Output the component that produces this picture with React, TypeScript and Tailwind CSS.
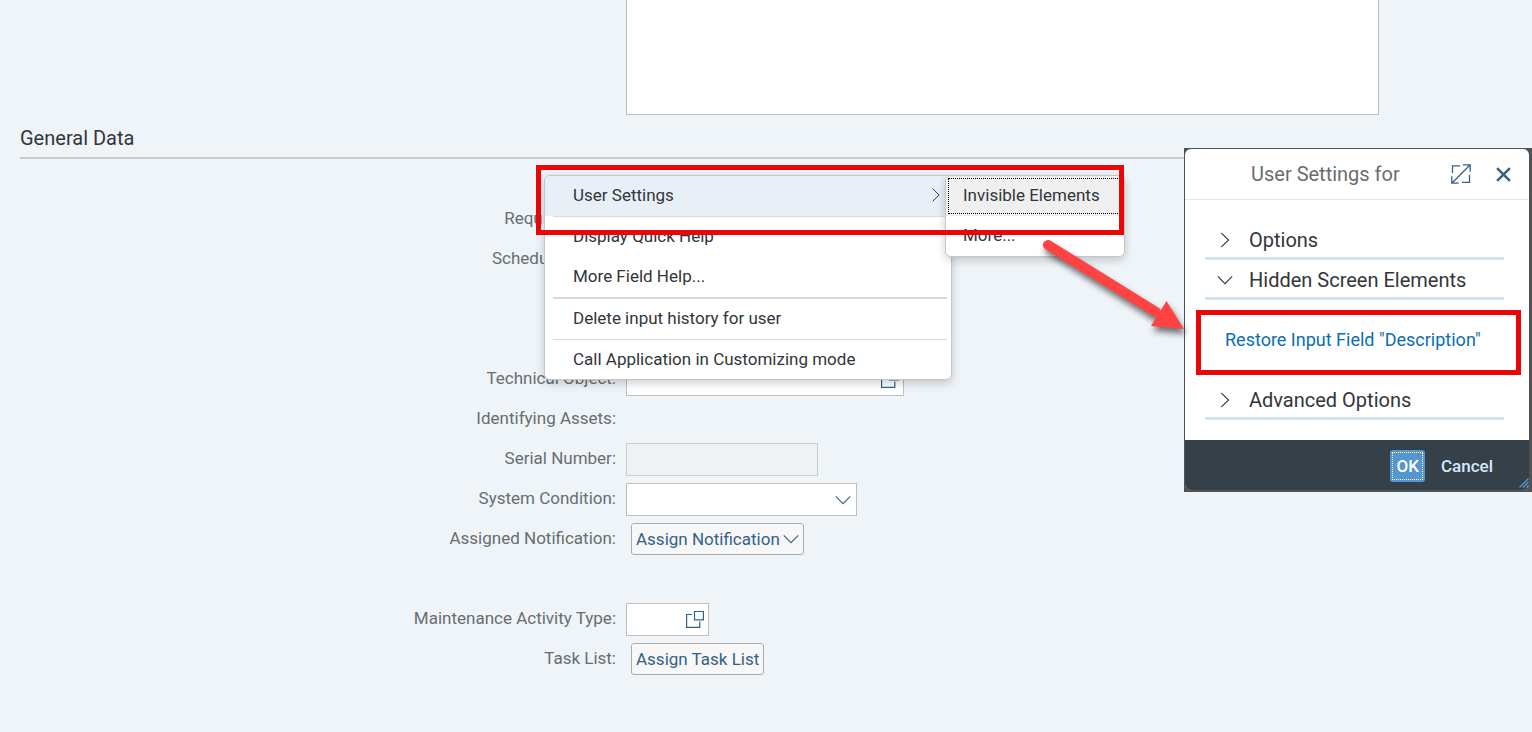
import React from "react"
import { clsx } from "clsx"

type IconProps = { className?: string }

function ChevronIcon({ className }: IconProps) {
  return (
    <svg viewBox="0 0 16 16" fill="none" stroke="currentColor" strokeWidth="1.1" className={className} aria-hidden="true">
      <path d="M4.2 0.8 11.6 8 4.2 15.2" />
    </svg>
  )
}

function ChevronDownIcon({ className }: IconProps) {
  return (
    <svg viewBox="0 0 16 16" fill="none" stroke="currentColor" strokeWidth="1.1" className={className} aria-hidden="true">
      <path d="M0.8 4.4 8 11.6 15.2 4.4" />
    </svg>
  )
}

function ValueHelpIcon({ className }: IconProps) {
  return (
    <svg viewBox="0 0 18 18" fill="none" stroke="currentColor" strokeWidth="1.2" className={className} aria-hidden="true">
      <path d="M6 4.5H.6v12.900h13.200V11.500" />
      <path d="M8.500 1.500h8.900v8.400H8.500z" />
    </svg>
  )
}

function MaximizeIcon({ className }: IconProps) {
  return (
    <svg viewBox="0 0 20 20" fill="none" stroke="currentColor" strokeWidth="1.3" className={className} aria-hidden="true">
      <path d="M.8 19.2 19.2.8M12 .8h7.2v7M.8 12.200v7h7M1.500 9V1.800h7.500M18.500 11v7.400H11" />
    </svg>
  )
}

function CloseIcon({ className }: IconProps) {
  return (
    <svg viewBox="0 0 14 14" fill="none" stroke="currentColor" strokeWidth="2.3" className={className} aria-hidden="true">
      <path d="M1 1 13 13M13 1 1 13" />
    </svg>
  )
}

function FormRow({ label, id, children }: { label?: string; id?: string; children?: React.ReactNode }) {
  return (
    <div className="flex h-10 items-center gap-[10px]">
      <label htmlFor={id} className="w-[616px] shrink-0 pb-0.5 text-right text-[#6a6d70]">
        {label}
      </label>
      {children}
    </div>
  )
}

function ValueHelpInput({ id, className }: { id: string; className: string }) {
  return (
    <div className={clsx("flex h-[33px] items-center border border-[#bfbfbf] bg-white pr-1", className)}>
      <input id={id} type="text" className="h-full w-0 min-w-0 flex-1 outline-none" />
      <button type="button" aria-label="Value help" className="text-[#346187]">
        <ValueHelpIcon className="h-[18px] w-[18px]" />
      </button>
    </div>
  )
}

const actionButton =
  "ml-[5px] flex h-8 items-center gap-[3px] rounded-[3px] border border-[#ababab] bg-[#f7f7f7] px-1 text-[#346187]"

function GeneralData() {
  return (
    <section>
      <h2 className="ml-5 border-b-2 border-[#cacaca] pt-2 pb-1 text-[20px] leading-[30px] text-[#32363a]">
        General Data
      </h2>
      <form className="pt-10">
        <FormRow label="Required Start:" />
        <FormRow label="Scheduled Start:" />
        <FormRow />
        <FormRow />
        <FormRow label="Technical Object:" id="technical-object">
          <ValueHelpInput id="technical-object" className="w-[278px]" />
        </FormRow>
        <FormRow label="Identifying Assets:" />
        <FormRow label="Serial Number:" id="serial-number">
          <input
            id="serial-number"
            type="text"
            readOnly
            className="h-[33px] w-[192px] border border-[#cccccc] bg-[#eff2f5] px-2"
          />
        </FormRow>
        <FormRow label="System Condition:" id="system-condition">
          <div className="relative">
            <select
              id="system-condition"
              className="block h-[33px] w-[231px] appearance-none border border-[#bfbfbf] bg-white px-2"
            >
              <option></option>
            </select>
            <ChevronDownIcon className="pointer-events-none absolute top-[9px] right-1.5 h-4 w-4 text-[#346187]" />
          </div>
        </FormRow>
        <FormRow label="Assigned Notification:" id="assign-notification">
          <button id="assign-notification" type="button" className={actionButton}>
            Assign Notification
            <ChevronDownIcon className="h-4 w-4" />
          </button>
        </FormRow>
        <FormRow />
        <FormRow label="Maintenance Activity Type:" id="activity-type">
          <ValueHelpInput id="activity-type" className="w-[83px]" />
        </FormRow>
        <FormRow label="Task List:" id="assign-task-list">
          <button id="assign-task-list" type="button" className={actionButton}>
            Assign Task List
          </button>
        </FormRow>
      </form>
    </section>
  )
}

function MenuItem({ children, className }: { children: React.ReactNode; className?: string }) {
  return (
    <button
      type="button"
      role="menuitem"
      className={clsx("flex h-10 w-full items-center justify-between pr-2 pb-0.5 pl-7 text-left", className)}
    >
      {children}
    </button>
  )
}

function ContextMenu() {
  return (
    <div
      role="menu"
      className="absolute top-[175px] left-[544px] h-[205px] w-[408px] overflow-hidden rounded-md border border-[#c4c6c8] bg-white text-[#32363a] shadow-[0_3px_10px_rgba(0,0,0,0.2)]"
    >
      <MenuItem className="bg-[#e8eff6]">
        User Settings
        <ChevronIcon className="h-[14px] w-[14px]" />
      </MenuItem>
      <hr className="mr-1 ml-2 border-[#d9dcde]" />
      <MenuItem>Display Quick Help</MenuItem>
      <MenuItem>More Field Help...</MenuItem>
      <hr className="mr-1 ml-2 border-t-2 border-[#d5dadd]" />
      <MenuItem>Delete input history for user</MenuItem>
      <hr className="mr-1 ml-2 border-[#d9dcde]" />
      <MenuItem>Call Application in Customizing mode</MenuItem>
    </div>
  )
}

function SubMenu() {
  return (
    <div
      role="menu"
      className="absolute top-[175px] left-[945px] w-[180px] overflow-hidden rounded-md border border-[#c4c6c8] bg-white text-[#32363a] shadow-[0_3px_10px_rgba(0,0,0,0.2)]"
    >
      <button type="button" role="menuitem" className="flex h-10 w-full bg-[#efefef] p-0.5 text-left">
        <span className="flex h-full w-full items-center border border-dotted border-black pb-0.5 pl-[14px]">
          Invisible Elements
        </span>
      </button>
      <button type="button" role="menuitem" className="flex h-10 w-full items-center pb-0.5 pl-[17px] text-left">
        More...
      </button>
    </div>
  )
}

function PanelHeader({ title, open }: { title: string; open?: boolean }) {
  return (
    <button
      type="button"
      aria-expanded={!!open}
      className="flex h-10 w-full items-center gap-4 border-b-[3px] border-[#d3e2ef] pt-0.5 pl-3 text-left text-[20px] text-[#32363a]"
    >
      {open ? <ChevronDownIcon className="h-4 w-4" /> : <ChevronIcon className="h-4 w-4" />}
      {title}
    </button>
  )
}

function SettingsDialog() {
  return (
    <div
      role="dialog"
      aria-labelledby="dialog-title"
      className="absolute top-[148px] right-0 w-[348px] border-t border-r-[3px] border-b-2 border-l border-[#505356] bg-[#505356]"
    >
      <div className="overflow-hidden rounded-md bg-white">
        <header className="flex h-[51px] items-center border-b border-[#e5e5e5] pr-[18px] pl-[66px] text-[#346187]">
          <h2 id="dialog-title" className="flex-1 text-[20px] text-[#6a6d70]">
            User Settings for
          </h2>
          <button type="button" aria-label="Maximize" className="mr-[25px]">
            <MaximizeIcon className="h-5 w-5" />
          </button>
          <button type="button" aria-label="Close">
            <CloseIcon className="h-[15px] w-[15px]" />
          </button>
        </header>
        <div className="pt-5 pr-[25px] pb-5 pl-5">
          <PanelHeader title="Options" />
          <PanelHeader title="Hidden Screen Elements" open />
          <div className="flex h-20 items-center pl-5">
            <a href="#restore" className="text-[18px] text-[#0a6eb4]">
              Restore Input Field "Description"
            </a>
          </div>
          <PanelHeader title="Advanced Options" />
        </div>
        <footer className="relative flex h-[50px] items-center justify-end gap-4 bg-[#354049] pt-0.5 pr-9">
          <button type="button" className="h-8 rounded-[3px] bg-[#5496cd] p-0.5 font-medium text-white">
            <span className="flex h-full items-center border border-dotted border-white px-[3px]">OK</span>
          </button>
          <button type="button" className="font-medium text-[#d1e8ff]">
            Cancel
          </button>
          <svg
            viewBox="0 0 10 10"
            stroke="#5496cd"
            strokeWidth="1.4"
            className="absolute right-0 bottom-0.5 h-[10px] w-[10px]"
            aria-hidden="true"
          >
            <path d="M.5 9.5 9.5.5M4 9.5 9.5 4M7.5 9.5l2-2" />
          </svg>
        </footer>
      </div>
    </div>
  )
}

// Red boxes and arrow drawn on top of the screen
function Annotations() {
  return (
    <div className="pointer-events-none">
      <div className="absolute top-[165px] left-[536px] h-[70px] w-[588px] border-[5px] border-[#e90606]" />
      <div className="absolute top-[310px] right-[11px] h-[65px] w-[325px] border-[5px] border-[#e90606]" />
      <svg
        viewBox="0 0 160 110"
        className="absolute top-[230px] left-[1034px] h-[110px] w-[160px] drop-shadow-[2px_5px_3px_rgba(0,0,0,0.55)]"
        aria-hidden="true"
      >
        <path d="M14 15 122 82" stroke="#ff4343" strokeWidth="10" strokeLinecap="round" />
        <path d="M132.500 71 150 99 117 96Z" fill="#ff4343" />
      </svg>
    </div>
  )
}

export default function App() {
  return (
    <main className="relative min-h-screen overflow-hidden bg-[#eff4f8] font-['Roboto','Liberation_Sans',sans-serif] text-[17px] leading-6">
      <div className="pr-[153px] pl-[626px]">
        <textarea
          aria-label="Long text"
          className="block h-[115px] w-full resize-none border border-t-0 border-[#bfbfbf] bg-white p-2"
        />
      </div>
      <GeneralData />
      <ContextMenu />
      <SubMenu />
      <SettingsDialog />
      <Annotations />
    </main>
  )
}
